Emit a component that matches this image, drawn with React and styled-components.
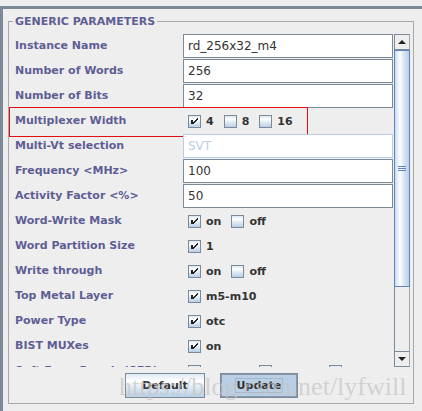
import React from "react";
import styled, { createGlobalStyle } from "styled-components";

const GlobalStyle = createGlobalStyle`
  html, body {
    margin: 0;
    padding: 0;
    background: #eeeeee;
  }
  * {
    box-sizing: border-box;
  }
`;

const rows = [
  { label: "Instance Name", field: "rd_256x32_m4" },
  { label: "Number of Words", field: "256" },
  { label: "Number of Bits", field: "32" },
  {
    label: "Multiplexer Width",
    marked: true,
    options: [
      ["4", true],
      ["8", false],
      ["16", false],
    ],
  },
  { label: "Multi-Vt selection", field: "SVT", disabled: true },
  { label: "Frequency <MHz>", field: "100" },
  { label: "Activity Factor <%>", field: "50" },
  {
    label: "Word-Write Mask",
    options: [
      ["on", true],
      ["off", false],
    ],
  },
  { label: "Word Partition Size", options: [["1", true]] },
  {
    label: "Write through",
    options: [
      ["on", true],
      ["off", false],
    ],
  },
  { label: "Top Metal Layer", options: [["m5-m10", true]] },
  { label: "Power Type", options: [["otc", true]] },
  { label: "BIST MUXes", options: [["on", true]] },
  {
    label: "Soft Error Repair (SER)",
    options: [
      ["16 bits", false],
      ["32 bits", false],
      ["64 bits", false],
    ],
  },
];

// metal look check mark, pixel by pixel
const checkPixels = [
  [3, 5], [4, 5], [3, 6], [4, 6], [3, 7], [4, 7], [3, 8], [4, 8],
  [9, 3], [8, 4], [7, 5], [6, 6], [5, 7],
  [9, 4], [8, 5], [7, 6], [6, 7], [5, 8],
];

const App = () => {
  return (
    <>
      <GlobalStyle />
      <Window>
        <Frame>
          <Group>
            <Title>GENERIC PARAMETERS</Title>
            <ScrollArea>
              <Viewport>
                {rows.map((row, i) => (
                  <Row key={row.label + i} $marked={row.marked}>
                    <Label>{row.label}</Label>
                    {row.options ? (
                      <Options>
                        {row.options.map(([text, checked]) => (
                          <Option key={text}>
                            <Box>
                              {checked && (
                                <svg
                                  width="11"
                                  height="11"
                                  viewBox="1 1 11 11"
                                  shapeRendering="crispEdges"
                                >
                                  {checkPixels.map(([x, y]) => (
                                    <rect
                                      key={x + "-" + y}
                                      x={x}
                                      y={y}
                                      width="1"
                                      height="1"
                                      fill="#222"
                                    />
                                  ))}
                                </svg>
                              )}
                            </Box>
                            {text}
                          </Option>
                        ))}
                      </Options>
                    ) : (
                      <Field $disabled={row.disabled}>{row.field}</Field>
                    )}
                  </Row>
                ))}
              </Viewport>
              <ScrollBar>
                <ArrowButton>
                  <svg width="8" height="4" viewBox="0 0 8 4">
                    <polygon points="0,4 8,4 4,0" fill="#222" />
                  </svg>
                </ArrowButton>
                <Track>
                  <Thumb>
                    <Grip />
                    <Grip />
                    <Grip />
                  </Thumb>
                </Track>
                <ArrowButton>
                  <svg width="8" height="4" viewBox="0 0 8 4">
                    <polygon points="0,0 8,0 4,4" fill="#222" />
                  </svg>
                </ArrowButton>
              </ScrollBar>
            </ScrollArea>
            <ButtonRow>
              <Button>Default</Button>
              <Button $pressed>
                <Focus>Update</Focus>
              </Button>
            </ButtonRow>
          </Group>
        </Frame>
        <Watermark>https://blog.csdn.net/lyfwill</Watermark>
      </Window>
    </>
  );
};

export default App;

const Window = styled.div`
  position: relative;
  width: 422px;
  height: 411px;
  overflow: hidden;
  background: #eeeeee;
  font-family: "DejaVu Sans", "Noto Sans", sans-serif;
`;

const Frame = styled.div`
  margin-top: 6px;
  height: 405px;
  border-top: 3px solid #7a8a99;
  border-left: 3px solid #7a8a99;
  padding: 6px 0 0 5px;
`;

const Group = styled.fieldset`
  margin: 0;
  padding: 0;
  min-width: 0;
  width: 406px;
  height: 389px;
  border: 1px solid #a8a8a8;
  display: flex;
  flex-direction: column;
`;

const Title = styled.legend`
  margin-left: 4px;
  padding: 0 2px;
  font-size: 11px;
  font-weight: 700;
  line-height: 13px;
  color: #5e5e95;
`;

const ScrollArea = styled.div`
  display: flex;
  margin-top: 6px;
  height: 333px;
`;

const Viewport = styled.div`
  width: 385px;
  height: 333px;
  overflow: hidden;
`;

const Row = styled.div`
  position: relative;
  display: grid;
  grid-template-columns: 174px 210px;
  height: 25px;

  &::after {
    content: "";
    display: ${(p) => (p.$marked ? "block" : "none")};
    position: absolute;
    left: 0;
    top: -2px;
    width: 297px;
    height: 28px;
    border: 1px solid #e01010;
    pointer-events: none;
  }
`;

const Label = styled.div`
  padding-left: 6px;
  font-size: 11px;
  font-weight: 700;
  line-height: 24px;
  color: #5e5e95;
  white-space: nowrap;
`;

const Field = styled.div`
  height: 24px;
  padding-left: 4px;
  background: #ffffff;
  border: 1px solid ${(p) => (p.$disabled ? "#b8cfe5" : "#7a8a99")};
  color: ${(p) => (p.$disabled ? "#b8cfe5" : "#333333")};
  font-size: 12px;
  line-height: 22px;
  white-space: nowrap;
`;

const Options = styled.div`
  display: flex;
  align-items: center;
  gap: 10px;
  height: 25px;
  padding-left: 5px;
`;

const Option = styled.div`
  display: flex;
  align-items: center;
  gap: 5px;
  font-size: 11px;
  font-weight: 700;
  color: #333333;
  white-space: nowrap;
`;

const Box = styled.span`
  display: block;
  width: 13px;
  height: 13px;
  border: 1px solid #7a8a99;
  background: linear-gradient(
    to bottom,
    #dde8f3 0%,
    #ffffff 30%,
    #dde8f3 60%,
    #b8cfe5 100%
  );

  svg {
    display: block;
  }
`;

const ScrollBar = styled.div`
  width: 16px;
  display: flex;
  flex-direction: column;
  height: 333px;
`;

const ArrowButton = styled.div`
  height: 16px;
  display: flex;
  align-items: center;
  justify-content: center;
  background: #eeeeee;
  border: 1px solid #7a8a99;
  border-right-color: #a0a8b0;
`;

const Track = styled.div`
  flex: 1;
  display: flex;
  flex-direction: column;
  background: #eeeeee;
  border-left: 1px solid #7a8a99;
  border-right: 1px solid #a0a8b0;
`;

const Thumb = styled.div`
  margin-left: -1px;
  margin-right: -1px;
  height: 237px;
  display: flex;
  flex-direction: column;
  align-items: center;
  justify-content: center;
  gap: 1px;
  border: 1px solid #6382bf;
  background: linear-gradient(
    to right,
    #c8ddf2 0%,
    #ffffff 35%,
    #dde8f3 60%,
    #b8cfe5 100%
  );
`;

const Grip = styled.span`
  display: block;
  width: 8px;
  height: 1px;
  background: #6382bf;
`;

const ButtonRow = styled.div`
  display: flex;
  justify-content: center;
  gap: 15px;
  padding-top: 6px;
  padding-left: 1px;
`;

const Button = styled.div`
  display: flex;
  align-items: center;
  justify-content: center;
  width: ${(p) => (p.$pressed ? "78px" : "80px")};
  height: 25px;
  font-size: 11px;
  font-weight: 700;
  color: #333333;
  border: 1px solid #7a8a99;
  box-shadow: ${(p) => (p.$pressed ? "inset 0 0 0 1px #8a9aab" : "none")};
  background: ${(p) =>
    p.$pressed
      ? "#b8cfe5"
      : "linear-gradient(to bottom, #dde8f3 0%, #ffffff 30%, #dde8f3 60%, #b8cfe5 100%)"};
`;

const Focus = styled.span`
  padding: 0 1px;
  line-height: 13px;
  border: 1px solid #a3b8cc;
`;

const Watermark = styled.div`
  position: absolute;
  left: 119px;
  top: 374px;
  font-family: "Liberation Serif", serif;
  font-size: 26px;
  line-height: 26px;
  color: rgba(196, 196, 196, 0.7);
  white-space: nowrap;
  pointer-events: none;
`;
